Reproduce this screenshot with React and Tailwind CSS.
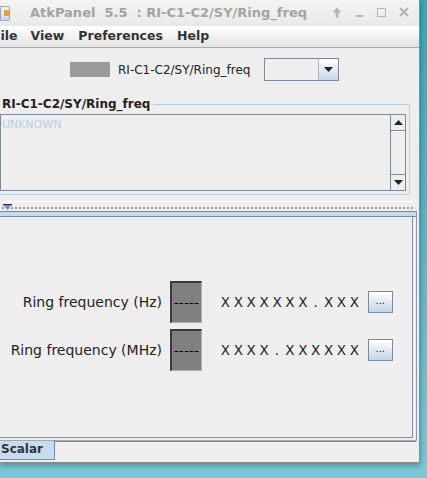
import React from 'react';

const font = { fontFamily: '"DejaVu Sans", sans-serif' };

function Chars({ text }) {
  return (
    <div className="flex text-[13.5px] text-[#222]">
      {text.split('').map((c, i) => (
        <span key={i} className="inline-block w-[12.9px] text-center">{c}</span>
      ))}
    </div>
  );
}

function ScalarRow({ label, format }) {
  return (
    <div className="flex items-center h-[42px]">
      <div className="w-[163px] text-right text-[14px] text-[#222] pr-[1px]">{label}</div>
      <div className="ml-[7px] w-[32px] h-[42px] bg-[#808080] border-l-2 border-t-2 border-[#3a3a3a] border-r border-b border-r-[#b0b0b0] border-b-[#b0b0b0] flex items-center justify-center text-[13px] tracking-[0.3px] whitespace-nowrap text-black leading-none">
        -----
      </div>
      <div className="ml-[17px]">
        <Chars text={format} />
      </div>
      <button className="ml-[7px] w-[25px] h-[22px] border border-[#7a8a99] bg-gradient-to-b from-white to-[#c3d4e6] text-[10px] leading-none text-[#222] flex items-center justify-center pb-[2px]">
        ...
      </button>
    </div>
  );
}

export default function App() {
  return (
    <div className="w-[427px] h-[478px] bg-gradient-to-b from-[#38a9b9] to-[#7cc8d6] overflow-hidden" style={font}>
      <div className="w-[420px] h-[463px] bg-[#eeeeee] border-r border-b border-[#8a8a8a] shadow-[0_2px_6px_rgba(0,0,0,0.35)] flex flex-col">
        {/* title bar */}
        <div className="h-[26px] shrink-0 bg-gradient-to-b from-[#f4f4f2] to-[#e9e9e7] flex items-center relative">
          <div className="w-[10px] h-[15px] rounded-r-[2px] border border-[#9aa8b8] bg-gradient-to-b from-[#f0f4f8] to-[#c8d8e8] flex items-center justify-end">
            <div className="w-[5px] h-[6px] bg-[#e8a030] rounded-[1px]" />
          </div>
          <div className="ml-[20px] text-[13px] font-bold text-[#a3a3a3] whitespace-pre">AtkPanel  5.5  : RI-C1-C2/SY/Ring_freq</div>
          <svg className="absolute left-[332px] top-[7px]" width="10" height="11" viewBox="0 0 10 11">
            <path d="M5 0.5 L9.5 5.5 H6.3 V10.5 H3.7 V5.5 H0.5 Z" fill="#b4b4b4" />
          </svg>
          <div className="absolute left-[356px] top-[15px] w-[7px] h-[2px] bg-[#b4b4b4]" />
          <div className="absolute left-[377px] top-[8px] w-[9px] h-[9px] border-[1.5px] border-[#b4b4b4]" />
          <svg className="absolute left-[399px] top-[7px]" width="10" height="10" viewBox="0 0 10 10">
            <path d="M1 1 L9 9 M9 1 L1 9" stroke="#b4b4b4" strokeWidth="2" />
          </svg>
        </div>

        {/* menu bar */}
        <div className="h-[22px] shrink-0 bg-gradient-to-b from-white to-[#e4e4e4] border-b border-[#a8a8a8] flex items-center text-[12.5px] font-bold text-[#333] overflow-hidden">
          <span className="ml-[-8px]">File</span>
          <span className="ml-[13px]">View</span>
          <span className="ml-[14px]">Preferences</span>
          <span className="ml-[14px]">Help</span>
        </div>

        {/* attribute row */}
        <div className="h-[43px] shrink-0 flex items-center pl-[70px]">
          <div className="w-[40px] h-[15px] bg-[#9b9b9b]" />
          <div className="ml-[8px] text-[12px] text-[#222]">RI-C1-C2/SY/Ring_freq</div>
          <div className="ml-[14px] flex h-[23px] border border-[#7a8aa0]">
            <div className="w-[54px] bg-[#eeeeee] border-r border-[#a8b8c8]" />
            <div className="w-[19px] bg-gradient-to-b from-white to-[#c8d8e8] flex items-center justify-center">
              <svg width="9" height="5" viewBox="0 0 9 5"><path d="M0 0 H9 L4.5 5 Z" fill="#222" /></svg>
            </div>
          </div>
        </div>

        {/* titled border */}
        <div className="relative w-[410px] h-[104px] mt-[6px] shrink-0">
          <div className="absolute left-0 top-[7px] w-[410px] h-[91px] border-r border-b border-t border-[#b8cfe5]" />
          <div className="absolute left-0 top-[1px] pl-[2px] pr-[3px] bg-[#eeeeee] text-[12px] font-bold text-[#222] leading-[13px]">RI-C1-C2/SY/Ring_freq</div>
          <div className="absolute left-0 top-[17px] w-[406px] h-[77px] border border-[#7a8a99] bg-[#eeeeee] flex">
            <div className="flex-1 text-[11px] text-[#b8cfe5] leading-none pt-[4px] pl-[1px]">UNKNOWN</div>
            <div className="w-[15px] border-l border-[#7a8a99] flex flex-col">
              <div className="h-[16px] border-b border-[#7a8a99] flex items-center justify-center">
                <svg width="9" height="5" viewBox="0 0 9 5"><path d="M0 5 H9 L4.5 0 Z" fill="#222" /></svg>
              </div>
              <div className="flex-1 border-b border-[#7a8a99] border-t border-t-white" />
              <div className="h-[15px] flex items-center justify-center">
                <svg width="9" height="5" viewBox="0 0 9 5"><path d="M0 0 H9 L4.5 5 Z" fill="#222" /></svg>
              </div>
            </div>
          </div>
        </div>

        {/* splitter */}
        <div className="h-[10px] w-[417px] shrink-0 border-t border-white relative">
          <div className="absolute left-[2px] top-[5px] right-[4px] border-t-2 border-dotted border-[#999]" />
          <svg className="absolute left-[3px] top-[2px]" width="9" height="6" viewBox="0 0 9 6">
            <rect x="0" y="0" width="9" height="1.5" fill="#333" />
            <path d="M1 1.5 H8 L4.5 6 Z" fill="#6a8ac8" />
          </svg>
        </div>

        {/* tabbed pane */}
        <div className="w-[417px] shrink-0 flex flex-col border-r border-[#8a9ab0]">
          <div className="h-px bg-[#6a88b5]" />
          <div className="h-[4px] bg-[#c8daf0]" />
          <div className="h-px bg-[#7a8aa0]" />
          <div className="w-[413px] h-[221px] border-r border-b border-[#8a8f99] flex flex-col pt-[64px] gap-[6px]">
            <ScalarRow label="Ring frequency (Hz)" format="XXXXXXX.XXX" />
            <ScalarRow label="Ring frequency (MHz)" format="XXXX.XXXXXX" />
          </div>
          <div className="h-[3px] border-b border-[#a0a8b8]" />
        </div>
        <div className="flex h-[19px] shrink-0">
          <div className="w-[55px] bg-[#c8dcf0] border-r border-b border-[#6b88c8] text-[12px] font-bold text-[#333] leading-[17px] pl-[1px]">Scalar</div>
          <div className="w-[361px] border-t border-[#6b88c8]" />
        </div>
      </div>
    </div>
  );
}
